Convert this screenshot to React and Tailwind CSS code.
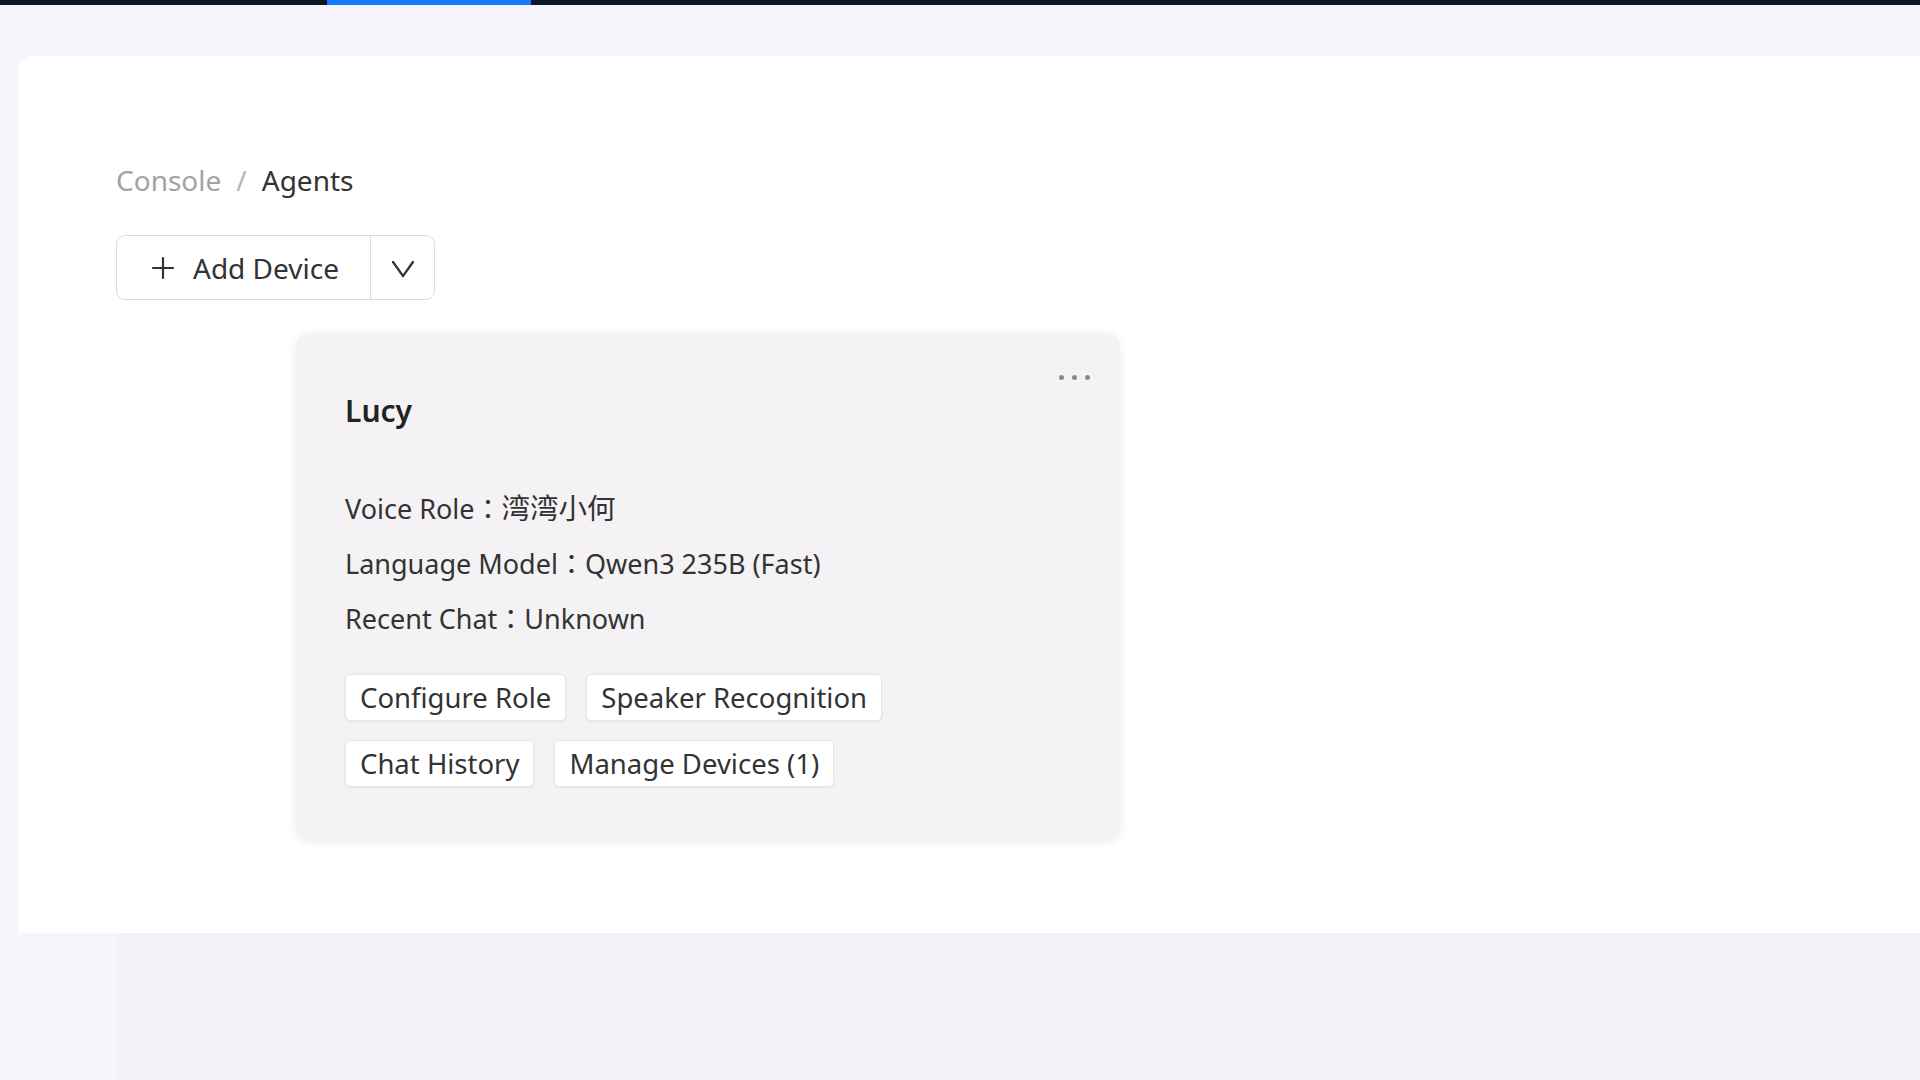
import React from "react";

function Plus() {
  return (
    <svg width="26" height="26" viewBox="0 0 26 26" fill="none" stroke="#333" strokeWidth="2.2" strokeLinecap="round">
      <path d="M13 3v20M3 13h20" />
    </svg>
  );
}

function Chevron() {
  return (
    <svg width="26" height="26" viewBox="0 0 26 26" fill="none" stroke="#333" strokeWidth="2.2" strokeLinecap="round" strokeLinejoin="round">
      <path d="M3 7l10 14L23 7" />
    </svg>
  );
}

function ActionBtn({ children }) {
  return (
    <button className="h-[47px] px-[14px] bg-white border border-[#e6e4e8] rounded-[5px] shadow-[0_1px_3px_rgba(0,0,0,0.06)] text-[27.5px] leading-none text-[#333]">
      {children}
    </button>
  );
}

function Colon() {
  return <span style={{ fontFamily: '"Noto Sans CJK TC", sans-serif' }}>：</span>;
}

export default function App() {
  return (
    <div
      className="w-full h-[1080px] bg-[#f4f4fa] flex flex-col overflow-hidden"
      style={{ fontFamily: '"Noto Sans", "Noto Sans CJK SC", sans-serif' }}
    >
      <div className="h-[5px] bg-[#0b1727] flex shrink-0">
        <div className="ml-[327px] w-[204px] bg-[#1677ff]" />
      </div>
      <div className="pl-[18px] pt-[51px]">
        <div className="h-[877px] bg-white rounded-tl-[14px] pl-[98px] pt-[105px]">
          <div className="flex items-center text-[28px] leading-[38px]">
            <span className="text-[#a3a3a3]">Console</span>
            <span className="text-[#b5b5b5] mx-[15px]">/</span>
            <span className="text-[#333]">Agents</span>
          </div>
          <div className="mt-[36px] flex h-[65px] w-[319px] border border-[#dcdcdc] rounded-[9px] bg-white">
            <div className="w-[254px] flex items-center pl-[33px] gap-[17px] border-r border-[#dcdcdc]">
              <Plus />
              <span className="text-[28px] text-[#333] leading-none">Add Device</span>
            </div>
            <div className="flex-1 flex items-center justify-center">
              <Chevron />
            </div>
          </div>
          <div className="mt-[33px] ml-[180px] w-[824px] h-[507px] bg-[#f4f2f5] rounded-[14px] shadow-[0_2px_10px_rgba(0,0,0,0.08)] relative pl-[49px] pt-[58px]">
            <div className="absolute right-[30px] top-[42px] flex gap-[8px]">
              <span className="w-[5px] h-[5px] rounded-full bg-[#8a8a8a]" />
              <span className="w-[5px] h-[5px] rounded-full bg-[#8a8a8a]" />
              <span className="w-[5px] h-[5px] rounded-full bg-[#8a8a8a]" />
            </div>
            <div className="text-[30px] font-semibold leading-[40px] text-[#222]">Lucy</div>
            <div className="mt-[58px] flex flex-col gap-[16px] text-[27px] leading-[38px] text-[#333]">
              <div>Voice Role<Colon /><span className="text-[28.5px]">湾湾小何</span></div>
              <div>Language Model<Colon />Qwen3 235B (Fast)</div>
              <div>Recent Chat<Colon />Unknown</div>
            </div>
            <div className="mt-[36px] flex flex-col gap-[19px]">
              <div className="flex gap-[20px]">
                <ActionBtn>Configure Role</ActionBtn>
                <ActionBtn>Speaker Recognition</ActionBtn>
              </div>
              <div className="flex gap-[20px]">
                <ActionBtn>Chat History</ActionBtn>
                <ActionBtn>Manage Devices (1)</ActionBtn>
              </div>
            </div>
          </div>
        </div>
      </div>
      <div className="flex-1 flex">
        <div className="w-[116px] bg-[#f5f5fc]" />
        <div className="flex-1 bg-[#f3f3f7]" />
      </div>
    </div>
  );
}
